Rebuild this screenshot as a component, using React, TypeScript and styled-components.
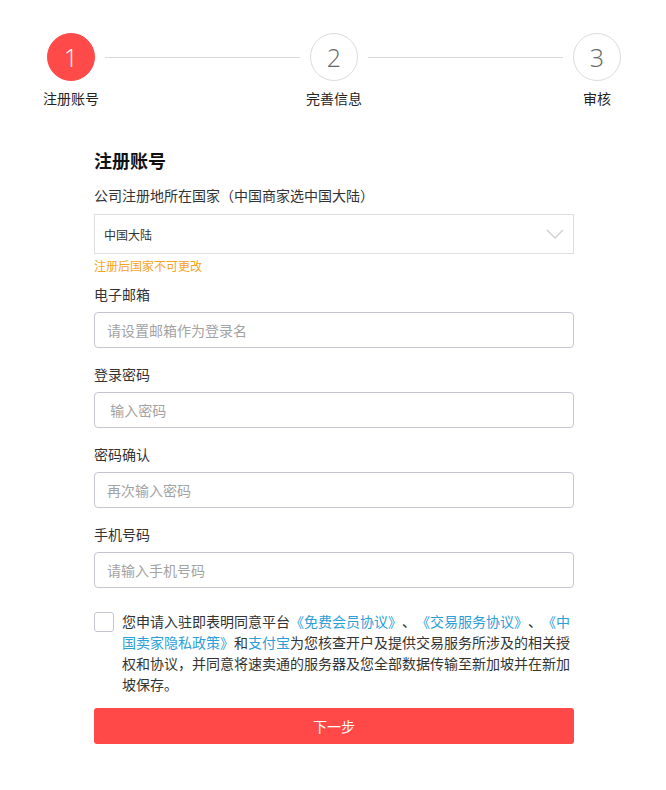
import React from "react";
import styled, { createGlobalStyle } from "styled-components";

const Global = createGlobalStyle`
  html, body { margin: 0; padding: 0; background: #fff; }
  body {
    font-family: "Noto Sans CJK SC", "Noto Sans", sans-serif;
    color: #333;
    text-spacing-trim: space-all;
  }
  * { box-sizing: border-box; }
`;

const Page = styled.div`
  width: 666px;
  padding-top: 33px;
`;

const Steps = styled.div`
  display: flex;
  align-items: flex-start;
  padding: 0 35px 0 37px;
`;

const Step = styled.div`
  width: 68px;
  display: flex;
  flex-direction: column;
  align-items: center;
  flex: none;
`;

const Circle = styled.div<{ $active?: boolean }>`
  width: 48px;
  height: 48px;
  border-radius: 50%;
  display: flex;
  align-items: center;
  justify-content: center;
  font-family: "Open Sans", "Noto Sans", sans-serif;
  font-weight: 300;
  font-size: 25px;
  background: ${(p) => (p.$active ? "#ff4a4a" : "#fff")};
  color: ${(p) => (p.$active ? "#fff" : "#666")};
  border: 1px solid ${(p) => (p.$active ? "#ff4a4a" : "#dcdcdc")};
`;

const StepLabel = styled.div`
  margin-top: 9px;
  font-size: 14px;
  line-height: 16px;
  color: #222;
  white-space: nowrap;
`;

const Line = styled.div`
  flex: 1;
  height: 1px;
  background: #d9d9d9;
  margin-top: 24px;
`;

const Form = styled.div`
  width: 480px;
  margin: 42px 0 0 94px;
  display: flex;
  flex-direction: column;
`;

const Title = styled.h2`
  margin: 0;
  font-size: 18px;
  line-height: 24px;
  font-weight: 700;
  color: #111;
`;

const Label = styled.div<{ $mt?: number }>`
  font-size: 14px;
  line-height: 20px;
  color: #333;
  margin-top: ${(p) => p.$mt ?? 16}px;
  margin-bottom: ${(p) => (p.$mt === 13 ? 9 : 8)}px;
`;

const Select = styled.div`
  height: 40px;
  border: 1px solid #dedede;
  display: flex;
  align-items: center;
  justify-content: space-between;
  padding: 0 9px;
  font-size: 12px;
  color: #333;
`;

const Note = styled.div`
  margin-top: 4px;
  font-size: 12px;
  line-height: 16px;
  color: #f7a31c;
`;

const Input = styled.input`
  height: 36px;
  width: 100%;
  border: 1px solid #c3c6cf;
  border-radius: 4px;
  padding: 0 12px;
  font-size: 14px;
  font-family: inherit;
  color: #333;
  outline: none;
  &::placeholder { color: #a3a3a3; }
`;

const Agree = styled.div`
  margin-top: 23px;
  display: flex;
  align-items: flex-start;
  gap: 8px;
`;

const Check = styled.div`
  width: 20px;
  height: 20px;
  border: 1px solid #c3c6cf;
  border-radius: 3px;
  flex: none;
  margin-top: 1px;
`;

const AgreeText = styled.p`
  margin: 0;
  width: 452px;
  font-size: 14px;
  line-height: 21px;
  color: #333;
`;

const Link = styled.a`
  color: #2c9ed8;
  text-decoration: none;
`;

const Button = styled.button`
  margin-top: 13px;
  height: 36px;
  width: 100%;
  border: none;
  border-radius: 3px;
  background: #ff4848;
  color: #fff;
  font-size: 14px;
  font-family: inherit;
`;

const Chevron = () => (
  <svg width="18" height="10" viewBox="0 0 18 10" fill="none">
    <path d="M1 1l8 8 8-8" stroke="#cfcfcf" strokeWidth="1.3" />
  </svg>
);

export default function App() {
  return (
    <Page>
      <Global />
      <Steps>
        <Step>
          <Circle $active>1</Circle>
          <StepLabel>注册账号</StepLabel>
        </Step>
        <Line />
        <Step>
          <Circle>2</Circle>
          <StepLabel>完善信息</StepLabel>
        </Step>
        <Line />
        <Step>
          <Circle>3</Circle>
          <StepLabel>审核</StepLabel>
        </Step>
      </Steps>
      <Form>
        <Title>注册账号</Title>
        <Label $mt={13}>公司注册地所在国家（中国商家选中国大陆）</Label>
        <Select>
          <span>中国大陆</span>
          <Chevron />
        </Select>
        <Note>注册后国家不可更改</Note>
        <Label $mt={10}>电子邮箱</Label>
        <Input placeholder="请设置邮箱作为登录名" />
        <Label>登录密码</Label>
        <Input placeholder=" 输入密码" />
        <Label>密码确认</Label>
        <Input placeholder="再次输入密码" />
        <Label>手机号码</Label>
        <Input placeholder="请输入手机号码" />
        <Agree>
          <Check />
          <AgreeText>
            您申请入驻即表明同意平台<Link>《免费会员协议》</Link>、<Link>《交易服务协议》</Link>、<Link>《中国卖家隐私政策》</Link>和<Link>支付宝</Link>为您核查开户及提供交易服务所涉及的相关授权和协议，并同意将速卖通的服务器及您全部数据传输至新加坡并在新加坡保存。
          </AgreeText>
        </Agree>
        <Button>下一步</Button>
      </Form>
    </Page>
  );
}
